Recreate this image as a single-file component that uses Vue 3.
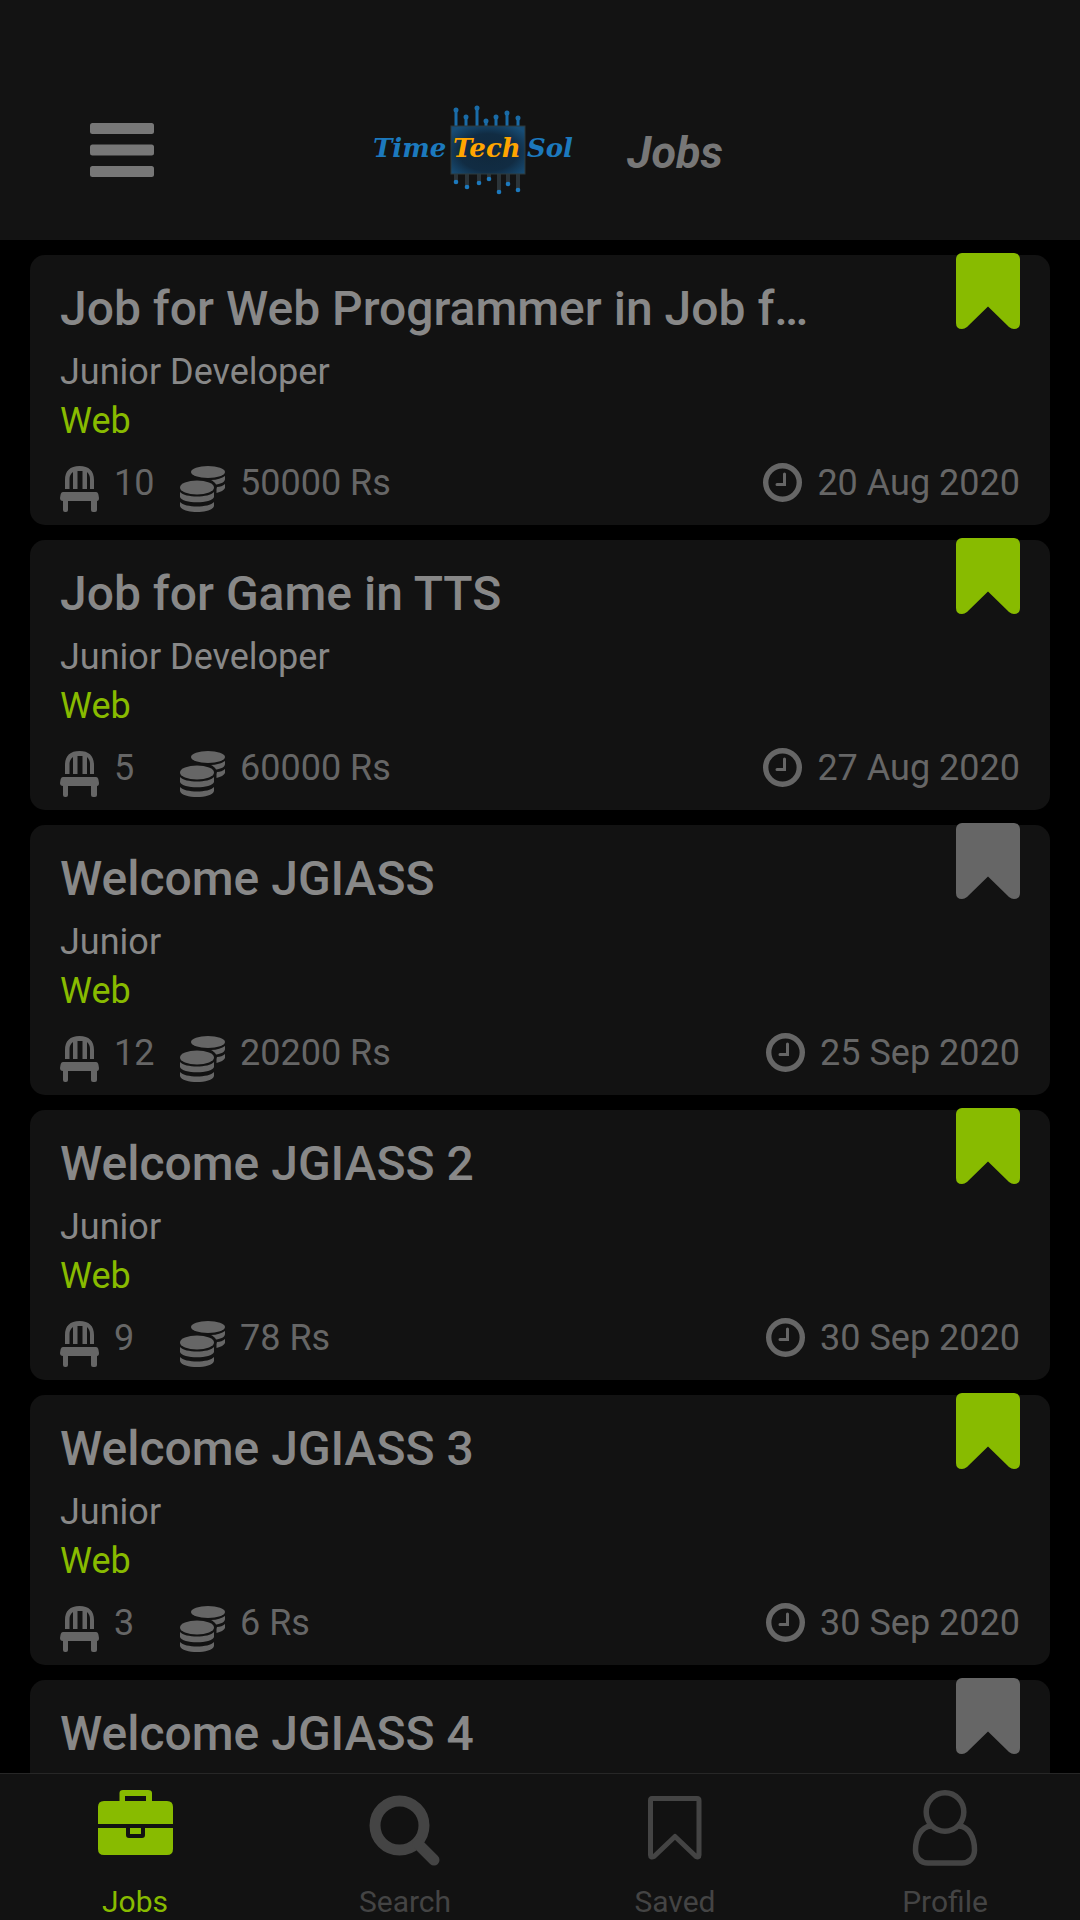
<script setup>
const jobs = [
  { title: 'Job for Web Programmer in Job for Web', level: 'Junior Developer', field: 'Web', seats: 10, pay: '50000 Rs', date: '20 Aug 2020', saved: true },
  { title: 'Job for Game in TTS', level: 'Junior Developer', field: 'Web', seats: 5, pay: '60000 Rs', date: '27 Aug 2020', saved: true },
  { title: 'Welcome JGIASS', level: 'Junior', field: 'Web', seats: 12, pay: '20200 Rs', date: '25 Sep 2020', saved: false },
  { title: 'Welcome JGIASS 2', level: 'Junior', field: 'Web', seats: 9, pay: '78 Rs', date: '30 Sep 2020', saved: true },
  { title: 'Welcome JGIASS 3', level: 'Junior', field: 'Web', seats: 3, pay: '6 Rs', date: '30 Sep 2020', saved: true },
  { title: 'Welcome JGIASS 4', saved: false },
]

/* Pins of the chip in the logo: [x, end y] */
const topPins = [[83, 6], [93, 13], [104, 4], [113, 17], [123, 13], [134, 9], [145, 14]]
const bottomPins = [[83, 78], [94, 83], [106, 79], [116, 75], [126, 88], [135, 80], [145, 86]]
</script>

<template>
  <div class="app">
    <header class="header">
      <button class="menu" type="button" aria-label="Open menu">
        <svg width="64" height="54" viewBox="0 0 64 54" fill="currentColor">
          <rect width="64" height="11" rx="2.5" />
          <rect y="21.5" width="64" height="11" rx="2.5" />
          <rect y="43" width="64" height="11" rx="2.5" />
        </svg>
      </button>
      <div class="brand">
        <svg class="logo" width="206" height="92" viewBox="0 0 206 92" role="img" aria-label="TimeTechSol">
          <defs>
            <radialGradient id="chip" cx="50%" cy="55%" r="65%">
              <stop offset="0" stop-color="#10283c" />
              <stop offset="0.6" stop-color="#112c43" />
              <stop offset="1" stop-color="#174d76" />
            </radialGradient>
          </defs>
          <g stroke="#1a6ca8" stroke-width="3" fill="#1c79bd">
            <template v-for="[x, y] in topPins" :key="'t' + x">
              <path :d="`M${x} ${y}V23`" />
              <circle :cx="x" :cy="y" r="1" />
            </template>
          </g>
          <template v-for="[x, y] in bottomPins" :key="'b' + x">
            <path :d="`M${x} 70V${y}`" stroke="#2b3439" stroke-width="4" />
            <circle :cx="x" :cy="y" r="2.3" fill="#1c79bd" />
          </template>
          <rect x="78" y="22" width="74" height="48" fill="url(#chip)" stroke="#2f3a3c" />
          <g class="logo-text">
            <text x="0" y="53" fill="#1c79bd">Time</text>
            <text x="80" y="53" fill="#ffa500">Tech</text>
            <text x="154" y="53" fill="#1c79bd">Sol</text>
          </g>
        </svg>
        <h1>Jobs</h1>
      </div>
    </header>

    <main class="list">
      <article v-for="job in jobs" :key="job.title" class="card">
        <h2>{{ job.title }}</h2>
        <template v-if="job.level">
          <p class="level">{{ job.level }}</p>
          <p class="field">{{ job.field }}</p>
          <div class="meta">
            <svg class="low" width="39" height="46" viewBox="0 0 39 46" fill="currentColor">
              <path d="M5 23V14C5 5 10 0 19.500 0S34 5 34 14V23H30V13C30 10 29 8 27 6V23H22.500V5H17.500V23H13V6C10.500 8 9.500 10 9.500 13V23Z" />
              <path d="M3 26H36Q38 26 38.500 29L39 32Q39 35 37 35V44Q37 46 35 46H33Q31 46 31 44V35H8V44Q8 46 6 46H5Q3 46 3 44V35Q0 35 0 32L.5 29Q1 26 3 26Z" />
            </svg>
            <span class="seats">{{ job.seats }}</span>
            <svg class="low" width="45" height="46" viewBox="0 0 45 46" fill="currentColor">
              <ellipse cx="28" cy="6" rx="17" ry="6" />
              <ellipse cx="17" cy="21.500" rx="17" ry="7" />
              <path d="M0 26C5 32 29 32 34 26V31C32 38 2 38 0 31Z" />
              <path d="M0 36C5 42 29 42 34 36V40C32 48 2 48 0 40Z" />
              <path d="M31 14C37 14 42 12 45 10V13C45 16 41 18 36 18.500C35 16.500 33 15 31 14Z" />
              <path d="M37 21C40 21 43 20 45 18V22C44 24 41 26 36.500 27V23Z" />
            </svg>
            <span class="pay">{{ job.pay }}</span>
            <svg class="clock" width="39" height="39" viewBox="0 0 39 39" fill="none" stroke="currentColor">
              <circle cx="19.500" cy="19.500" r="16.800" stroke-width="5.400" />
              <path d="M21.500 11V21.500H14" stroke-width="3" stroke-linecap="round" />
            </svg>
            <time>{{ job.date }}</time>
          </div>
        </template>
        <button type="button" class="bookmark" :class="{ saved: job.saved }" :aria-pressed="job.saved" aria-label="Save job">
          <svg width="64" height="76" viewBox="0 0 64 76" fill="currentColor">
            <path d="M6 0H58A6 6 0 0 1 64 6V70Q64 76 58 76Q55.500 76 53 74L32 53.500L11 74Q8.500 76 6 76Q0 76 0 70V6A6 6 0 0 1 6 0Z" />
          </svg>
        </button>
      </article>
    </main>

    <nav class="tabs" aria-label="Main">
      <a href="#jobs" class="active" aria-current="page">
        <svg width="76" height="80" viewBox="0 0 76 80">
          <path fill="currentColor" fill-rule="evenodd" d="M22.500 14V6Q22.500 3 26 3H51Q55 3 55 6V14H70Q76 14 76 20V37H1V20Q1 14 7 14ZM28 9V14H49V9Z" />
          <path fill="currentColor" d="M1 41H29V48Q29 51 32 51H45Q48 51 48 48V41H76V62Q76 68 70 68H7Q1 68 1 62Z" />
          <path fill="currentColor" d="M33 41H44V47H33Z" />
        </svg>
        <span>Jobs</span>
      </a>
      <a href="#search">
        <svg width="76" height="80" viewBox="0 0 76 80" fill="none" stroke="currentColor">
          <circle cx="32.500" cy="38.500" r="24.500" stroke-width="11" />
          <path d="M51 57L67 73" stroke-width="11" stroke-linecap="round" />
        </svg>
        <span>Search</span>
      </a>
      <a href="#saved">
        <svg width="76" height="80" viewBox="0 0 76 80" fill="none" stroke="currentColor" stroke-width="5" stroke-linejoin="round">
          <path d="M15 11.500H60Q62 11.500 62 13.500V68Q62 71 59 69.500L38 49.500L17 69.500Q13.500 71 13.500 68V13.500Q13.500 11.500 15 11.500Z" />
        </svg>
        <span>Saved</span>
      </a>
      <a href="#profile">
        <svg width="76" height="80" viewBox="0 0 76 80" fill="none" stroke="currentColor" stroke-width="5.500">
          <ellipse cx="38" cy="25" rx="18.800" ry="19.300" />
          <path d="M24 39C14 40 8.500 50 8.500 63C8.500 71 14 76 21 76H55C62 76 67.500 71 67.500 63C67.500 50 62 40 52 39" />
        </svg>
        <span>Profile</span>
      </a>
    </nav>
  </div>
</template>

<style>
html,
body {
  margin: 0;
  background: #000;
}
</style>

<style scoped>
.app {
  display: flex;
  flex-direction: column;
  height: 100vh;
  overflow: hidden;
  background: #000;
  color: #888;
  font-family: Roboto, "Liberation Sans", sans-serif;
}

button {
  padding: 0;
  border: 0;
  background: none;
}

svg {
  display: block;
  flex: none;
}

.header {
  display: grid;
  grid-template-columns: 1fr auto 1fr;
  align-items: center;
  flex: none;
  box-sizing: border-box;
  height: 240px;
  padding: 60px 74px 0 90px;
  background: #131313;
  color: #777;
}

.menu {
  justify-self: start;
  color: inherit;
}

.brand {
  display: flex;
  align-items: center;
  gap: 48px;
}

.logo-text {
  font: italic bold 26px "DejaVu Serif", serif;
}

h1 {
  margin: 6px 0 0;
  font-size: 45px;
  font-style: italic;
  font-weight: 700;
  line-height: 56px;
}

.list {
  display: flex;
  flex: 1;
  flex-direction: column;
  gap: 15px;
  min-height: 0;
  padding: 15px 30px 0;
  overflow: hidden;
}

.card {
  position: relative;
  flex: none;
  box-sizing: border-box;
  padding: 26px 30px 13px;
  border-radius: 15px;
  background: #121212;
}

/* The list runs on under the tab bar. */
.card:last-child {
  flex: 1;
  border-bottom-left-radius: 0;
  border-bottom-right-radius: 0;
}

h2 {
  width: 80%;
  margin: 0 0 11px;
  overflow: hidden;
  font-size: 48px;
  font-weight: 500;
  line-height: 56px;
  text-overflow: ellipsis;
  white-space: nowrap;
}

p {
  margin: 0;
  font-size: 36px;
  line-height: 49px;
}

.field {
  color: #8b0;
}

.meta {
  display: flex;
  height: 53px;
  margin-top: 13px;
  color: #666;
  font-size: 36px;
  line-height: 49px;
}

.low {
  align-self: flex-end;
}

.seats {
  width: 66px;
  margin-left: 15px;
}

.pay {
  flex: 1;
  margin-left: 15px;
}

.clock {
  margin: 4px 15px 0 0;
}

.bookmark {
  position: absolute;
  top: -2px;
  right: 30px;
  color: #666;
}

.bookmark.saved {
  color: #8b0;
}

.tabs {
  display: flex;
  flex: none;
  border-top: 1px solid #272727;
  background: #121212;
}

.tabs a {
  display: flex;
  flex: 1;
  flex-direction: column;
  align-items: center;
  gap: 17px;
  padding: 13px 0 0;
  color: #444;
  font-size: 30px;
  line-height: 36px;
  text-decoration: none;
}

.tabs a.active {
  color: #8b0;
}
</style>
